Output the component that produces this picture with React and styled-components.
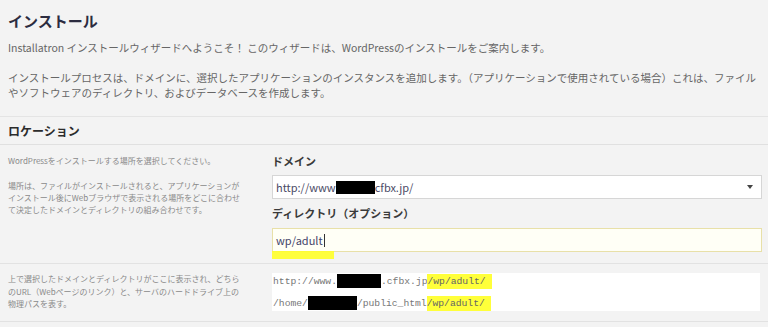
import React from 'react'
import styled, { createGlobalStyle } from 'styled-components'

const GlobalStyle = createGlobalStyle`
  html, body {
    margin: 0;
    background: #f3f3f3;
    font-family: "Noto Sans CJK JP", "Noto Sans", sans-serif;
  }
`

const Page = styled.div`
  width: 768px;
  height: 327px;
  overflow: hidden;
  background: #f3f3f3;
`

const Intro = styled.div`
  padding: 11px 8px 16px;
`

const Title = styled.h1`
  margin: 0;
  font-size: 15px;
  line-height: 20px;
  font-weight: 700;
  color: #2c2c40;
`

const Para = styled.p`
  margin: ${p => p.$top || 0}px 0 0;
  font-size: 10.5px;
  line-height: 15px;
  color: #666;
`

const SectionHead = styled.h2`
  margin: 0;
  padding: 4px 8px 3px;
  border-top: 1px solid #e4e4e4;
  border-bottom: 1px solid #e0e0e0;
  font-size: 12px;
  line-height: 20px;
  font-weight: 700;
  color: #2c2c2c;
`

const Row = styled.div`
  display: grid;
  grid-template-columns: 264px 1fr;
  padding: ${p => p.$pad};
  border-bottom: 1px solid #e2e2e2;
`

const Help = styled.div`
  padding-top: ${p => p.$top || 0}px;
  padding-right: 16px;
`

const HelpText = styled.p`
  margin: ${p => p.$top || 0}px 0 0;
  font-size: 8px;
  line-height: ${p => p.$lh || 12}px;
  color: #8a8a8a;
  white-space: nowrap;
`

const Field = styled.div`
  display: flex;
  flex-direction: column;
  padding-right: 6px;
`

const Label = styled.label`
  margin-top: ${p => p.$top || 0}px;
  font-size: 11px;
  line-height: 14px;
  font-weight: 700;
  color: #3a3a3a;
`

const Select = styled.div`
  margin-top: 7px;
  height: 24px;
  box-sizing: border-box;
  display: flex;
  align-items: center;
  padding: 0 8px 0 3px;
  background: #fff;
  border: 1px solid #d6d6d6;
  font-size: 11px;
  color: #4b4b66;
`

const Arrow = styled.span`
  margin-left: auto;
  width: 0;
  height: 0;
  border-left: 3.5px solid transparent;
  border-right: 3.5px solid transparent;
  border-top: 4px solid #444;
`

const Redact = styled.span`
  display: inline-block;
  width: ${p => p.$w}px;
  height: ${p => p.$h}px;
  background: #000;
  vertical-align: middle;
`

const InputWrap = styled.div`
  position: relative;
  margin-top: 8px;
`

const Input = styled.div`
  height: 24px;
  box-sizing: border-box;
  display: flex;
  align-items: center;
  padding: 0 3px;
  background: #fffff6;
  border: 1px solid #e8e0a8;
  font-size: 11px;
  color: #44446a;
`

const Caret = styled.span`
  display: inline-block;
  width: 1px;
  height: 13px;
  background: #333;
  margin-left: 1px;
`

const Marker = styled.span`
  position: absolute;
  left: 0;
  bottom: -7px;
  width: 62px;
  height: 8px;
  background: rgba(255, 255, 40, 0.9);
`

const PathBox = styled.div`
  display: flex;
  flex-direction: column;
  gap: 6px;
  height: 38px;
  box-sizing: border-box;
  padding-left: 1px;
  margin-right: 8px;
  background: #fff;
`

const PathLine = styled.div`
  height: 16px;
  display: flex;
  align-items: center;
  font-family: "Liberation Mono", "DejaVu Sans Mono", monospace;
  font-size: 9.7px;
  color: #777;
  white-space: pre;
`

const Mark = styled.span`
  background: #ffff3a;
  padding: 2px 6px 2px 0;
  color: #666;
`

export default function App() {
  return (
    <Page>
      <GlobalStyle />
      <Intro>
        <Title>インストール</Title>
        <Para $top={9}>
          Installatron インストールウィザードへようこそ！ このウィザードは、WordPressのインストールをご案内します。
        </Para>
        <Para $top={15}>
          インストールプロセスは、ドメインに、選択したアプリケーションのインスタンスを追加します。（アプリケーションで使用されている場合）これは、ファイル<br />
          やソフトウェアのディレクトリ、およびデータベースを作成します。
        </Para>
      </Intro>

      <SectionHead>ロケーション</SectionHead>

      <Row $pad="9px 0 11px 8px">
        <Help $top={1}>
          <HelpText>WordPressをインストールする場所を選択してください。</HelpText>
          <HelpText $top={13}>
            場所は、ファイルがインストールされると、アプリケーションが<br />
            インストール後にWebブラウザで表示される場所をどこに合わせ<br />
            て決定したドメインとディレクトリの組み合わせです。
          </HelpText>
        </Help>
        <Field>
          <Label>ドメイン</Label>
          <Select>
            http://www<Redact $w={39} $h={13} />cfbx.jp/
            <Arrow />
          </Select>
          <Label $top={7}>ディレクトリ（オプション）</Label>
          <InputWrap>
            <Input>
              wp/adult<Caret />
            </Input>
            <Marker />
          </InputWrap>
        </Field>
      </Row>

      <Row $pad="9px 0 10px 8px">
        <Help>
          <HelpText $lh={12.5}>
            上で選択したドメインとディレクトリがここに表示され、どちら<br />
            のURL（Webページのリンク）と、サーバのハードドライブ上の<br />
            物理パスを表す。
          </HelpText>
        </Help>
        <PathBox>
          <PathLine>
            http://www.<Redact $w={44} $h={14} />.cfbx.jp<Mark>/wp/adult/</Mark>
          </PathLine>
          <PathLine>
            /home/<Redact $w={49} $h={14} />/public_html<Mark>/wp/adult/</Mark>
          </PathLine>
        </PathBox>
      </Row>
    </Page>
  )
}
